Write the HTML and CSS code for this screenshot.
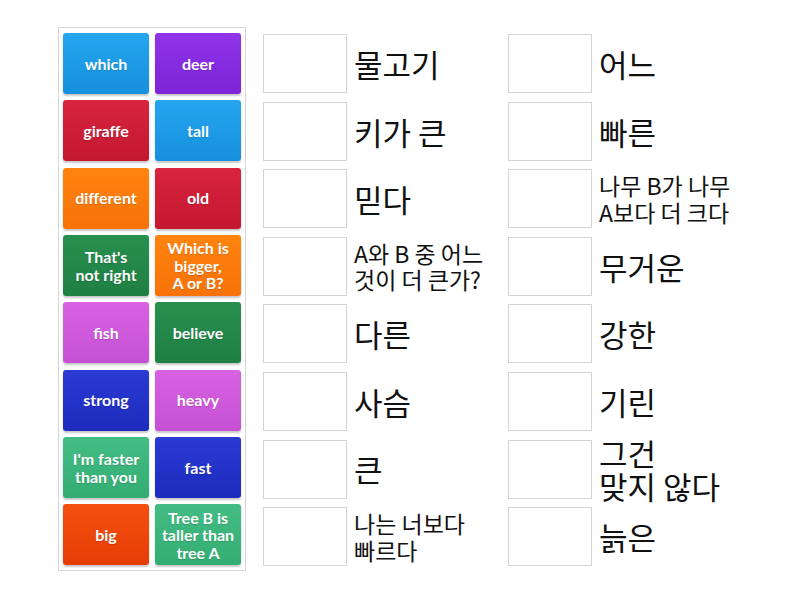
FILE: index.html
```html
<!DOCTYPE html>
<html>
  <head>
    <meta charset="utf-8">
    <link rel="stylesheet" href="styles.css">
  </head>
  <body>
    <div class="board">

      <div class="tray">
        <div class="tile blue">which</div>
        <div class="tile purple">deer</div>
        <div class="tile red">giraffe</div>
        <div class="tile blue">tall</div>
        <div class="tile orange">different</div>
        <div class="tile red">old</div>
        <div class="tile green">That's<br>not right</div>
        <div class="tile orange">Which is<br>bigger,<br>A or B?</div>
        <div class="tile pink">fish</div>
        <div class="tile green">believe</div>
        <div class="tile navy">strong</div>
        <div class="tile pink">heavy</div>
        <div class="tile teal">I'm faster<br>than you</div>
        <div class="tile navy">fast</div>
        <div class="tile flame">big</div>
        <div class="tile teal">Tree B is<br>taller than<br>tree A</div>
      </div>

      <div class="targets">
        <div class="slot"><div class="drop"></div><div class="word">물고기</div></div>
        <div class="slot"><div class="drop"></div><div class="word">어느</div></div>
        <div class="slot"><div class="drop"></div><div class="word">키가 큰</div></div>
        <div class="slot"><div class="drop"></div><div class="word">빠른</div></div>
        <div class="slot"><div class="drop"></div><div class="word">믿다</div></div>
        <div class="slot"><div class="drop"></div><div class="word small">나무 B가 나무<br>A보다 더 크다</div></div>
        <div class="slot"><div class="drop"></div><div class="word small">A와 B 중 어느<br>것이 더 큰가?</div></div>
        <div class="slot"><div class="drop"></div><div class="word">무거운</div></div>
        <div class="slot"><div class="drop"></div><div class="word">다른</div></div>
        <div class="slot"><div class="drop"></div><div class="word">강한</div></div>
        <div class="slot"><div class="drop"></div><div class="word">사슴</div></div>
        <div class="slot"><div class="drop"></div><div class="word">기린</div></div>
        <div class="slot"><div class="drop"></div><div class="word">큰</div></div>
        <div class="slot"><div class="drop"></div><div class="word">그건<br>맞지 않다</div></div>
        <div class="slot"><div class="drop"></div><div class="word small">나는 너보다<br>빠르다</div></div>
        <div class="slot"><div class="drop"></div><div class="word">늙은</div></div>
      </div>

    </div>
  </body>
</html>
```

FILE: styles.css
```css
body {
    margin: 0;
    background: #fff;
}
.board {
    display: flex;
    align-items: flex-start;
    padding: 27px 0 0 58px;
}
.tray {
    display: grid;
    grid-template-columns: 86px 86px;
    grid-auto-rows: 61px;
    column-gap: 6px;
    row-gap: 6.35px;
    padding: 5px 4px 5px 4px;
    border: 1px solid #d6d6d6;
}
.tile {
    display: flex;
    align-items: center;
    justify-content: center;
    text-align: center;
    border-radius: 3px;
    color: #fff;
    font-family: Lato, "Liberation Sans", sans-serif;
    font-weight: bold;
    font-size: 16px;
    line-height: 1.1;
    text-shadow: 0 1px 1px rgba(0, 0, 0, 0.15);
    box-shadow: 0 2px 2px rgba(0, 0, 0, 0.22);
}
.blue   { background: linear-gradient(#25a6ef, #1690dc); }
.purple { background: linear-gradient(#9034ea, #7c24d6); }
.red    { background: linear-gradient(#d8243f, #c3182f); }
.orange { background: linear-gradient(#ff840f, #f77208); }
.green  { background: linear-gradient(#28904f, #1f7f44); }
.pink   { background: linear-gradient(#d862e2, #c650d4); }
.navy   { background: linear-gradient(#2a3ad2, #1d2bbd); }
.teal   { background: linear-gradient(#43bd84, #33ad72); }
.flame  { background: linear-gradient(#f4500f, #e63d06); }

.targets {
    display: grid;
    grid-template-columns: 245px 245px;
    grid-auto-rows: 59px;
    row-gap: 8.6px;
    margin: 7px 0 0 17px;
}
.slot {
    display: flex;
    align-items: center;
}
.drop {
    width: 82px;
    height: 57px;
    border: 1px solid #d4d4d4;
    flex-shrink: 0;
}
.word {
    margin-left: 7px;
    font-family: "Noto Sans CJK KR", "Noto Sans", sans-serif;
    font-size: 31px;
    line-height: 1.07;
    color: #111;
    white-space: nowrap;
}
.word.small {
    font-size: 23px;
    line-height: 1.16;
}
```
